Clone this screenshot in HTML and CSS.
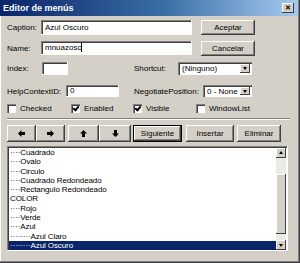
FILE: index.html
```html
<!DOCTYPE html>
<html lang="es">
<head>
    <meta charset="UTF-8">
    <title>Editor de menús</title>
    <link rel="stylesheet" href="styles.css">
</head>
<body>
<div class="win">
    <div class="titlebar">
        <span class="title">Editor de menús</span>
        <span class="close">&#x2715;</span>
    </div>
    <div class="body">
        <div class="row r1">
            <span class="lbl w34">Caption:</span>
            <span class="field wide">Azul Oscuro</span>
            <span class="btn side">Aceptar</span>
        </div>
        <div class="row r2">
            <span class="lbl w34">Name:</span>
            <span class="field wide">mnuazosc<i class="caret"></i></span>
            <span class="btn side">Cancelar</span>
        </div>
        <div class="row r3">
            <span class="lbl w35">Index:</span>
            <span class="field idx"></span>
            <span class="lbl short">Shortcut:</span>
            <span class="combo shortcut"><span class="val">(Ninguno)</span><span class="drop"></span></span>
        </div>
        <div class="row r4">
            <span class="lbl w59">HelpContextID:</span>
            <span class="field help">0</span>
            <span class="lbl nego">NegotiatePosition:</span>
            <span class="combo negpos"><span class="val">0 - None</span><span class="drop"></span></span>
        </div>
        <div class="row r5">
            <span class="chk c1"><i class="box"></i>Checked</span>
            <span class="chk c2"><i class="box on"></i>Enabled</span>
            <span class="chk c3"><i class="box on"></i>Visible</span>
            <span class="chk c4"><i class="box"></i>WindowList</span>
        </div>
        <div class="sep"></div>
        <div class="row tools">
            <span class="btn arr a1"><svg width="7" height="7" viewBox="0 0 7 7"><polygon points="0,3.5 3.5,0 3.5,2 7,2 7,5 3.5,5 3.5,7"/></svg></span>
            <span class="btn arr a2"><svg width="7" height="7" viewBox="0 0 7 7"><polygon points="7,3.5 3.5,0 3.5,2 0,2 0,5 3.5,5 3.5,7"/></svg></span>
            <span class="btn arr a3"><svg width="7" height="7" viewBox="0 0 7 7"><polygon points="3.5,0 0,3.5 2,3.5 2,7 5,7 5,3.5 7,3.5"/></svg></span>
            <span class="btn arr a4"><svg width="7" height="7" viewBox="0 0 7 7"><polygon points="3.5,7 0,3.5 2,3.5 2,0 5,0 5,3.5 7,3.5"/></svg></span>
            <span class="btn def">Siguiente</span>
            <span class="btn ins">Insertar</span>
            <span class="btn del">Eliminar</span>
        </div>
        <div class="list">
            <div class="items">
                <div class="item">····Cuadrado</div>
                <div class="item">····Ovalo</div>
                <div class="item">····Circulo</div>
                <div class="item">····Cuadrado Redondeado</div>
                <div class="item">····Rectangulo Redondeado</div>
                <div class="item">COLOR</div>
                <div class="item">····Rojo</div>
                <div class="item">····Verde</div>
                <div class="item">····Azul</div>
                <div class="item">········Azul Claro</div>
                <div class="item sel">········Azul Oscuro</div>
            </div>
            <div class="vscroll">
                <span class="sbtn up"></span>
                <span class="track"></span>
                <span class="thumb"></span>
                <span class="track t2"></span>
                <span class="sbtn down"></span>
            </div>
        </div>
    </div>
</div>
</body>
</html>
```

FILE: styles.css
```css
*{
    margin:0;
    padding:0;
    box-sizing:border-box;
}
body{
    background:#d4d0c8;
    font-family:"Liberation Sans",Arial,sans-serif;
    font-size:8px;
    color:#000;
}
.win{
    width:300px;
    height:263px;
    background:#d4d0c8;
    box-shadow:inset -1px -1px #404040,inset -2px -2px #808080,inset 1px 1px #fff;
    padding-right:2px;
}
.titlebar{
    height:16px;
    background:linear-gradient(to right,#0a246a,#3a6ea5 55%,#a6caf0);
    display:flex;
    align-items:center;
    justify-content:space-between;
    padding:0 4px 0 3px;
}
.title{
    color:#fff;
    font-weight:bold;
    font-size:9px;
}
.close{
    width:12px;
    height:10px;
    background:#d4d0c8;
    box-shadow:inset -1px -1px #404040,inset 1px 1px #fff;
    font-size:7px;
    font-weight:bold;
    line-height:10px;
    text-align:center;
}
.body{
    padding-left:7px;
}
.row{
    display:flex;
    align-items:center;
}
.r1{margin-top:4px;height:15px;}
.r2{margin-top:6px;height:14px;}
.r3{margin-top:7px;height:13px;}
.r4{margin-top:10px;height:12px;}
.r5{margin-top:6px;height:10px;}
.lbl{
    white-space:nowrap;
}
.w34{width:34px;}
.w35{width:35px;}
.w59{width:59px;}
.field{
    height:100%;
    background:#fff;
    box-shadow:inset 1px 1px #808080,inset 2px 2px #404040;
    border-right:1px solid #fff;
    border-bottom:1px solid #fff;
    padding:0 4px;
    display:flex;
    align-items:center;
}
.wide{width:151px;}
.idx{width:26px;}
.help{width:53px;}
.caret{
    display:inline-block;
    width:1px;
    height:9px;
    background:#000;
}
.btn{
    display:flex;
    align-items:center;
    justify-content:center;
    background:#d4d0c8;
    box-shadow:inset -1px -1px #404040,inset 1px 1px #fff,inset -2px -2px #808080;
}
.side{
    width:54px;
    height:15px;
    margin-left:9px;
}
.short{margin-left:66px;width:44px;}
.nego{margin-left:15px;width:69px;}
.combo{
    height:100%;
    background:#fff;
    box-shadow:inset 1px 1px #808080,inset 2px 2px #404040;
    display:flex;
    align-items:center;
    padding:2px 2px 2px 4px;
}
.shortcut{width:74px;}
.negpos{width:49px;}
.val{flex:1;}
.drop{
    width:10px;
    height:100%;
    background:#d4d0c8;
    box-shadow:inset -1px -1px #404040,inset 1px 1px #fff;
    position:relative;
}
.drop::after{
    content:"";
    position:absolute;
    left:3px;
    top:3px;
    border-left:2px solid transparent;
    border-right:2px solid transparent;
    border-top:3px solid #000;
}
.chk{
    display:flex;
    align-items:center;
    white-space:nowrap;
}
.box{
    width:9px;
    height:9px;
    margin-right:4px;
    background:#fff;
    box-shadow:inset 1px 1px #808080,inset 2px 2px #404040;
    position:relative;
}
.box.on::after{
    content:"";
    position:absolute;
    left:3px;
    top:1px;
    width:2px;
    height:4px;
    border-right:2px solid #000;
    border-bottom:2px solid #000;
    transform:rotate(40deg);
}
.c1{width:64px;}
.c2{width:62px;}
.c3{width:63px;}
.sep{
    margin-top:5px;
    width:283px;
    height:2px;
    border-top:1px solid #808080;
    border-bottom:1px solid #fff;
}
.tools{
    margin-top:5px;
    height:17px;
}
.arr{
    height:100%;
}
.a1{width:29px;}
.a2{width:29px;}
.a3{width:31px;margin-left:3px;}
.a4{width:32px;}
.def{
    width:49px;
    margin-left:2px;
    height:100%;
    box-shadow:inset 0 0 0 1px #000,inset -2px -2px #404040,inset 2px 2px #fff,inset -3px -3px #808080;
}
.ins{width:48px;margin-left:4px;height:100%;}
.del{width:44px;margin-left:3px;height:100%;}
.list{
    margin-top:4px;
    width:281px;
    height:105px;
    background:#fff;
    box-shadow:inset 1px 1px #808080,inset 2px 2px #404040;
    border-right:1px solid #fff;
    border-bottom:1px solid #fff;
    padding:2px 1px 0 2px;
    display:flex;
}
.items{
    flex:1;
}
.item{
    height:9.3px;
    line-height:9.3px;
    padding-left:1px;
    white-space:nowrap;
    letter-spacing:-0.1px;
}
.sel{
    background:#0a246a;
    color:#fff;
}
.vscroll{
    width:10px;
    display:flex;
    flex-direction:column;
}
.sbtn{
    height:10px;
    background:#d4d0c8;
    box-shadow:inset -1px -1px #404040,inset 1px 1px #fff;
    position:relative;
}
.sbtn::after{
    content:"";
    position:absolute;
    left:3px;
    border-left:2px solid transparent;
    border-right:2px solid transparent;
}
.up::after{top:3px;border-bottom:3px solid #000;}
.down::after{top:4px;border-top:3px solid #000;}
.track{
    height:16px;
    background:#eceae6;
}
.t2{height:6px;}
.thumb{
    flex:1;
    background:#d4d0c8;
    box-shadow:inset -1px -1px #404040,inset 1px 1px #fff;
}
```
